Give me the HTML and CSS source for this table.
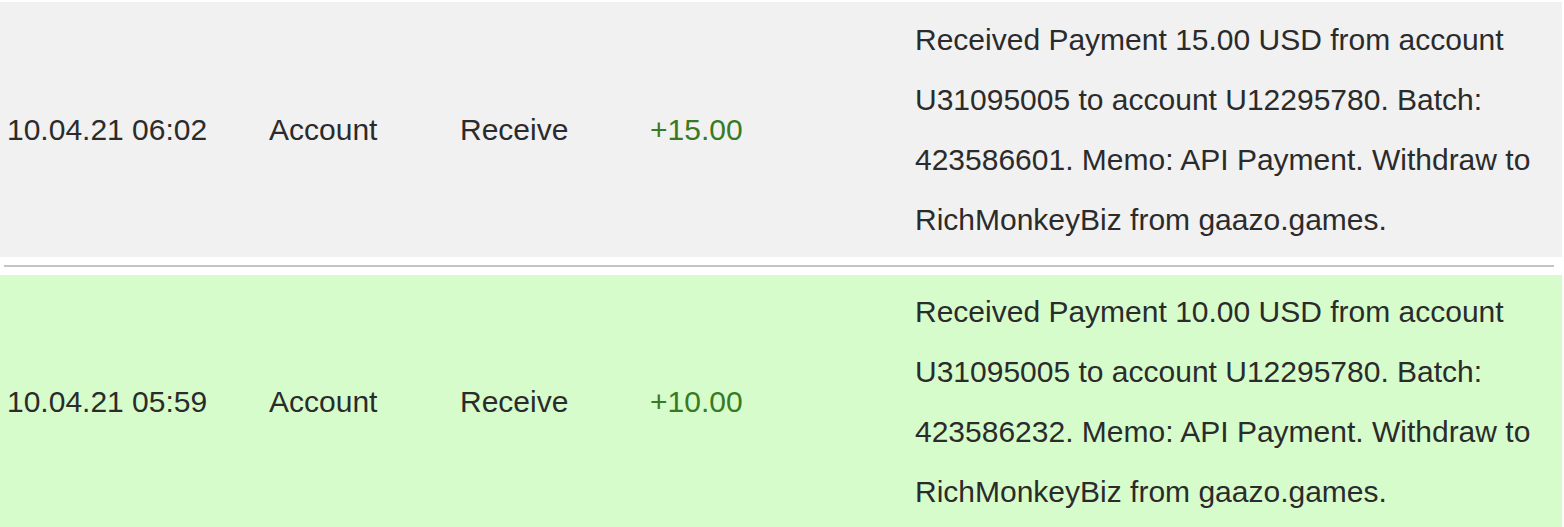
FILE: index.html
```html
<!DOCTYPE html>
<html>
<head>
<meta charset="utf-8">
<link rel="stylesheet" href="styles.css">
</head>
<body>
<div class="history">
  <div class="row row-gray">
    <div class="cell cell-date">10.04.21 06:02</div>
    <div class="cell cell-src">Account</div>
    <div class="cell cell-type">Receive</div>
    <div class="cell cell-amount">+15.00</div>
    <div class="cell cell-desc">Received Payment 15.00 USD from account U31095005 to account U12295780. Batch: 423586601. Memo: API Payment. Withdraw to RichMonkeyBiz from gaazo.games.</div>
  </div>
  <div class="separator"><div class="separator-line"></div></div>
  <div class="row row-green">
    <div class="cell cell-date">10.04.21 05:59</div>
    <div class="cell cell-src">Account</div>
    <div class="cell cell-type">Receive</div>
    <div class="cell cell-amount">+10.00</div>
    <div class="cell cell-desc">Received Payment 10.00 USD from account U31095005 to account U12295780. Batch: 423586232. Memo: API Payment. Withdraw to RichMonkeyBiz from gaazo.games.</div>
  </div>
</div>
</body>
</html>
```
FILE: styles.css
```css
html, body {
  margin: 0;
  padding: 0;
  background: #ffffff;
}

.history {
  width: 1562px;
  padding-top: 2px;
  font-family: "Liberation Sans", Arial, Helvetica, sans-serif;
  font-size: 30px;
  line-height: 60px;
  color: #2b2b2b;
}

.row {
  display: grid;
  grid-template-columns: 262px 191px 190px 265px 654px;
  align-items: center;
  padding: 7px 0 8px;
}

.row-gray {
  background: #f1f1f1;
  padding-top: 8px;
  padding-bottom: 7px;
}

.row-green {
  background: #d7fccb;
}

.cell {
  padding: 0 7px;
  white-space: nowrap;
}

.cell-desc {
  white-space: normal;
}

.cell-amount {
  color: #387a24;
}

.separator {
  height: 18px;
  display: flex;
  align-items: center;
  padding: 0 8px 0 4px;
}

.separator-line {
  flex: 1;
  height: 2px;
  background: #c4c4c4;
}
```
